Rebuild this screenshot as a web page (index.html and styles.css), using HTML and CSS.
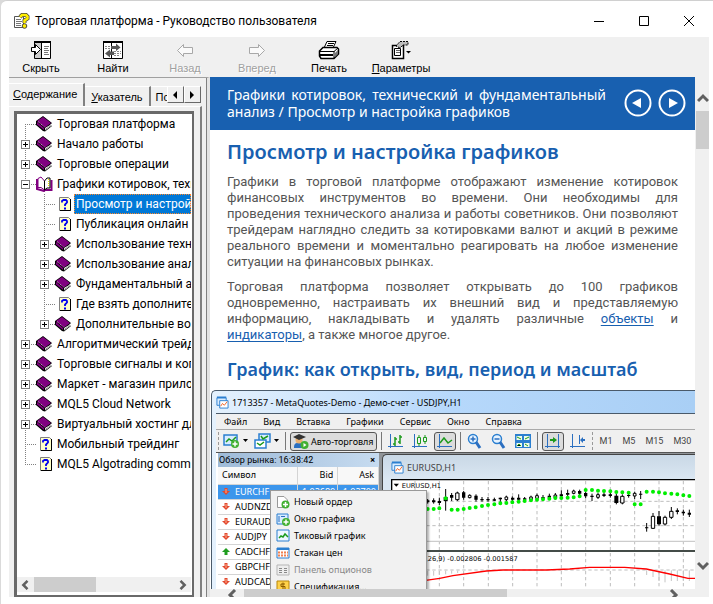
FILE: index.html
```
<!DOCTYPE html>
<html lang="ru">
<head>
    <meta charset="UTF-8">
    <meta name="viewport" content="width=device-width, initial-scale=1.0">
    <title>Торговая платформа - Руководство пользователя</title>
    <link rel="stylesheet" href="styles.css">
</head>
<body>
    <svg class="sprite" aria-hidden="true">
        <symbol id="book" viewBox="0 0 17 16">
            <path d="M0 5 L7 0 L16 7 L14 9 L16 10 L9 15.500 L7 15 L0 9 Z" fill="#000"/>
            <path d="M9 12 L15 8.500 V10 L9 14.500 Z" fill="#fff"/>
            <path d="M9 13.500 L15 9.500" stroke="#999" stroke-width="1"/>
            <path d="M1 5 L7 1 L15 7 L9 11.500 Z" fill="#800080"/>
            <path d="M1 6 L8 12 V14 L1 8.500 Z" fill="#800080"/>
            <path d="M2 5.500 L8.500 11" stroke="#d8a8d8" stroke-dasharray="1 1"/>
        </symbol>
        <symbol id="book-open" viewBox="0 0 17 16">
            <path d="M1 3 V13 L8 15 L9 14 H15.500 V4" fill="none" stroke="#800080" stroke-width="2"/>
            <path d="M2 2.500 L5 1 L8.500 5 V14 L5 11.500 H2 Z" fill="#fff" stroke="#800080"/>
            <path d="M8.500 5 L11 2 H14 V12 H11 L8.500 14 Z" fill="#fff" stroke="#000"/>
            <path d="M12.500 3 V11" stroke="#e8e800" stroke-dasharray="1 1"/>
        </symbol>
        <symbol id="topic" viewBox="0 0 17 16">
            <path d="M4.500 1.500 H13.500 L15.500 3.500 V14.500 H4.500 Z" fill="#ffffc8" stroke="#808080"/>
            <path d="M15.500 3 V14.500 H5" fill="none" stroke="#000"/>
            <path d="M7 6.500 V5 L8.500 4 H11 L12 5 V6.500 L10 8.500 V10" fill="none" stroke="#0000f0" stroke-width="1.800"/>
            <path d="M9 11.500 H11 V13.500 H9 Z" fill="#0000f0"/>
        </symbol>
        <symbol id="chart-window" viewBox="0 0 14 14">
            <path d="M1 2 H11 V10 H1 Z" fill="#d9ecff" stroke="#2b7fd0"/>
            <path d="M1 1.500 H11" stroke="#2b7fd0" stroke-width="2"/>
            <path d="M4 5 H13 V13 H4 Z" fill="#fff" stroke="#2b7fd0"/>
            <path d="M5 11 L7 8 L9 10 L12 6" fill="none" stroke="#f06020"/>
        </symbol>
        <symbol id="down" viewBox="0 0 8 9">
            <path d="M2.500 1 H5.500 V4 H8 L4 8 L0 4 H2.500 Z" fill="#e2492f"/>
            <path d="M4 2 V6" stroke="#ffb090"/>
        </symbol>
        <symbol id="up" viewBox="0 0 8 9">
            <path d="M2.500 8 H5.500 V5 H8 L4 1 L0 5 H2.500 Z" fill="#1f9d1f"/>
        </symbol>
        <symbol id="chevron" viewBox="0 0 12 12">
            <path d="M1 9 L6 4 L11 9" fill="none" stroke="#606060" stroke-width="3"/>
        </symbol>
    </svg>

    <div class="window">
        <header class="titlebar">
            <svg class="app-icon" viewBox="0 0 16 16">
                <path d="M0.500 3.500 H9.500 V14.500 H0.500 Z" fill="#fff" stroke="#555"/>
                <path d="M2 6.500 H7 M2 8.500 H8 M2 10.500 H7 M2 12.500 H7" stroke="#777"/>
                <path d="M6 4 L8 2 H12 L13.500 3.500 V5.500 L10.500 7.500 V10" fill="none" stroke="#444" stroke-width="4"/>
                <path d="M6 4 L8 2 H12 L13.500 3.500 V5.500 L10.500 7.500 V10" fill="none" stroke="#ffee00" stroke-width="2.500"/>
                <circle cx="10.500" cy="13" r="2.300" fill="#ffee00" stroke="#444"/>
            </svg>
            <span class="window-title">Торговая платформа - Руководство пользователя</span>
            <div class="window-controls">
                <button aria-label="Свернуть"><svg viewBox="0 0 12 12"><path d="M1 6.500 H11" stroke="#000"/></svg></button>
                <button aria-label="Развернуть"><svg viewBox="0 0 12 12"><path d="M1.500 1.500 H10.500 V10.500 H1.500 Z" fill="none" stroke="#000"/></svg></button>
                <button aria-label="Закрыть"><svg viewBox="0 0 12 12"><path d="M1 1 L11 11 M11 1 L1 11" stroke="#000"/></svg></button>
            </div>
        </header>

        <nav class="toolbar">
            <button class="tool">
                <svg viewBox="0 0 22 20">
                    <path d="M4.500 1.500 H20.500 V18.500 H4.500 Z" fill="#fff" stroke="#000"/>
                    <path d="M5 3 H11 V18 H5 Z" fill="#ccc"/>
                    <path d="M4 2 H21" stroke="#000" stroke-width="2"/>
                    <path d="M11.500 3 V18" stroke="#000"/>
                    <path d="M14 6.500 H19 M14 8.500 H18 M14 10.500 H19 M14 12.500 H18 M14 14.500 H19" stroke="#777"/>
                    <path d="M1.500 7.500 H5.500 V4.500 L10.500 9.500 L5.500 14.500 V11.500 H1.500 Z" fill="#fff" stroke="#000"/>
                </svg>
                <span>Скрыть</span>
            </button>
            <button class="tool">
                <svg viewBox="0 0 22 20">
                    <path d="M1.500 1.500 H20.500 V18.500 H1.500 Z" fill="#fff" stroke="#000"/>
                    <path d="M1 2 H21" stroke="#000" stroke-width="2"/>
                    <path d="M9.500 3 V18" stroke="#000"/>
                    <path d="M3 6.500 H9 M3 8.500 H8 M12 11.500 H19 M12 13.500 H19 M12 15.500 H18" stroke="#888" stroke-dasharray="2 1"/>
                    <path d="M9 6 H14 V3.500 L18.500 7.500 L14 11 V9 H9 Z" fill="#555"/>
                    <path d="M12 11.500 H8 V9.500 L3 13.500 L8 17.500 V15 H12 Z" fill="#555"/>
                </svg>
                <span>Найти</span>
            </button>
            <button class="tool" disabled>
                <svg viewBox="0 0 22 20"><path d="M3.500 10.500 L9.500 4.500 V7.500 H18.500 V13.500 H9.500 V16.500 Z" fill="#fafafa" stroke="#a8a8a8"/></svg>
                <span>Назад</span>
            </button>
            <button class="tool" disabled>
                <svg viewBox="0 0 22 20"><path d="M18.500 10.500 L12.500 4.500 V7.500 H3.500 V13.500 H12.500 V16.500 Z" fill="#fafafa" stroke="#a8a8a8"/></svg>
                <span>Вперед</span>
            </button>
            <button class="tool">
                <svg viewBox="0 0 22 20">
                    <path d="M6 8 L9 1.500 H18 L15 8 Z" fill="#fff" stroke="#000"/>
                    <path d="M10 3.500 H16 M9 5.500 H15" stroke="#000"/>
                    <path d="M1.500 11 L5 7.500 H19 L20.500 9 V14 L16 18.500 H3 L1.500 16 Z" fill="#fff" stroke="#000" stroke-width="1.500"/>
                    <path d="M1 11.500 H16 L20 8 M16 11 V18" fill="none" stroke="#000"/>
                    <path d="M2 15 H15" stroke="#000" stroke-width="2"/>
                    <path d="M17 13 L20 10 V14 L17 17 Z" fill="#777"/>
                </svg>
                <span>Печать</span>
            </button>
            <button class="tool">
                <svg viewBox="0 0 22 20">
                    <path d="M2.500 5.500 H13.500 V18.500 H2.500 Z" fill="#fff" stroke="#000" stroke-width="1.500"/>
                    <path d="M4.500 8.500 H10.500 V15.500 H4.500 Z" fill="#fff" stroke="#000"/>
                    <path d="M6 10.500 H10 M6 12.500 H10" stroke="#666"/>
                    <path d="M6 6 L10 1.500 H18 V5 H13 L10 8 Z" fill="#bbb" stroke="#000" stroke-dasharray="2 1"/>
                    <path d="M16 11 H21 L18.500 13.500 Z" fill="#000"/>
                </svg>
                <span><u>П</u>араметры</span>
            </button>
        </nav>

        <div class="panes">
            <aside class="sidebar">
                <div class="tabs">
                    <button class="tab active"><u>С</u>одержание</button>
                    <button class="tab"><u>У</u>казатель</button>
                    <button class="tab cut">По</button>
                    <div class="tab-scroll">
                        <button aria-label="Назад"><svg viewBox="0 0 8 8"><path d="M6 0 L2 4 L6 8 Z"/></svg></button>
                        <button aria-label="Вперед"><svg viewBox="0 0 8 8"><path d="M2 0 L6 4 L2 8 Z"/></svg></button>
                    </div>
                </div>
                <div class="tab-page">
                    <div class="tree-box">
                        <ul class="tree">
                            <li><div class="row"><span class="branch"></span><svg><use href="#book"/></svg><a href="#">Торговая платформа</a></div></li>
                            <li><div class="row"><span class="branch"><button class="plus" aria-label="Развернуть"></button></span><svg><use href="#book"/></svg><a href="#">Начало работы</a></div></li>
                            <li><div class="row"><span class="branch"><button class="plus" aria-label="Развернуть"></button></span><svg><use href="#book"/></svg><a href="#">Торговые операции</a></div></li>
                            <li>
                                <div class="row"><span class="branch"><button aria-label="Свернуть"></button></span><svg><use href="#book-open"/></svg><a href="#">Графики котировок, технический</a></div>
                                <ul>
                                    <li><div class="row"><span class="branch"></span><svg><use href="#topic"/></svg><a class="selected" href="#">Просмотр и настройка</a></div></li>
                                    <li><div class="row"><span class="branch"></span><svg><use href="#topic"/></svg><a href="#">Публикация онлайн</a></div></li>
                                    <li><div class="row"><span class="branch"><button class="plus" aria-label="Развернуть"></button></span><svg><use href="#book"/></svg><a href="#">Использование технических</a></div></li>
                                    <li><div class="row"><span class="branch"><button class="plus" aria-label="Развернуть"></button></span><svg><use href="#book"/></svg><a href="#">Использование аналитических</a></div></li>
                                    <li><div class="row"><span class="branch"><button class="plus" aria-label="Развернуть"></button></span><svg><use href="#book"/></svg><a href="#">Фундаментальный анализ</a></div></li>
                                    <li><div class="row"><span class="branch"></span><svg><use href="#topic"/></svg><a href="#">Где взять дополнительные</a></div></li>
                                    <li><div class="row"><span class="branch"><button class="plus" aria-label="Развернуть"></button></span><svg><use href="#book"/></svg><a href="#">Дополнительные возможности</a></div></li>
                                </ul>
                            </li>
                            <li><div class="row"><span class="branch"><button class="plus" aria-label="Развернуть"></button></span><svg><use href="#book"/></svg><a href="#">Алгоритмический трейдинг</a></div></li>
                            <li><div class="row"><span class="branch"><button class="plus" aria-label="Развернуть"></button></span><svg><use href="#book"/></svg><a href="#">Торговые сигналы и копирование</a></div></li>
                            <li><div class="row"><span class="branch"><button class="plus" aria-label="Развернуть"></button></span><svg><use href="#book"/></svg><a href="#">Маркет - магазин приложений</a></div></li>
                            <li><div class="row"><span class="branch"><button class="plus" aria-label="Развернуть"></button></span><svg><use href="#book"/></svg><a href="#">MQL5 Cloud Network</a></div></li>
                            <li><div class="row"><span class="branch"><button class="plus" aria-label="Развернуть"></button></span><svg><use href="#book"/></svg><a href="#">Виртуальный хостинг для</a></div></li>
                            <li><div class="row"><span class="branch"></span><svg><use href="#topic"/></svg><a href="#">Мобильный трейдинг</a></div></li>
                            <li><div class="row"><span class="branch"></span><svg><use href="#topic"/></svg><a href="#">MQL5 Algotrading community</a></div></li>
                        </ul>
                        <div class="tree-scroll">
                            <svg class="left" viewBox="0 0 12 12"><use href="#chevron"/></svg>
                            <span class="tree-thumb"></span>
                            <svg class="right" viewBox="0 0 12 12"><use href="#chevron"/></svg>
                        </div>
                    </div>
                </div>
            </aside>

            <div class="viewer">
                <div class="view-row">
                    <main class="doc">
                        <div class="doc-header">
                            <p>Графики котировок, технический и фундаментальный анализ / Просмотр и настройка графиков</p>
                            <button aria-label="Предыдущая"><svg viewBox="0 0 28 28"><circle cx="14" cy="14" r="12.500" fill="none" stroke="#fff" stroke-width="2"/><path d="M17 9 V19 L8 14 Z" fill="#fff"/></svg></button>
                            <button aria-label="Следующая"><svg viewBox="0 0 28 28"><circle cx="14" cy="14" r="12.500" fill="none" stroke="#fff" stroke-width="2"/><path d="M11 9 V19 L20 14 Z" fill="#fff"/></svg></button>
                        </div>
                        <div class="article">
                            <h1>Просмотр и настройка графиков</h1>
                            <p>
                                <span class="line">Графики в торговой платформе отображают изменение котировок</span>
                                <span class="line">финансовых инструментов во времени. Они необходимы для</span>
                                <span class="line">проведения технического анализа и работы советников. Они позволяют</span>
                                <span class="line">трейдерам наглядно следить за котировками валют и акций в режиме</span>
                                <span class="line">реального времени и моментально реагировать на любое изменение</span>
                                ситуации на финансовых рынках.
                            </p>
                            <p>
                                <span class="line">Торговая платформа позволяет открывать до 100 графиков</span>
                                <span class="line">одновременно, настраивать их внешний вид и представляемую</span>
                                <span class="line">информацию, накладывать и удалять различные <a href="#">объекты</a> и</span>
                                <a href="#">индикаторы</a>, а также многое другое.
                            </p>
                            <h2>График: как открыть, вид, период и масштаб</h2>
                        </div>

                        <div class="terminal">
                            <div class="term-title"><svg><use href="#chart-window"/></svg>1713357 - MetaQuotes-Demo - Демо-счет - USDJPY,H1</div>
                            <div class="term-menu">
                                <span>Файл</span><span>Вид</span><span>Вставка</span><span>Графики</span><span>Сервис</span><span>Окно</span><span>Справка</span>
                            </div>
                            <div class="term-tools">
                                <i class="grip"></i>
                                <svg class="wide" viewBox="0 0 27 18">
                                    <path d="M1 3 H14 V13 H1 Z" fill="#d9ecff" stroke="#2b7fd0" stroke-width="1.500"/><path d="M3 10 L6 7 L9 9 L13 5" fill="none" stroke="#1c9a1c" stroke-width="1.500"/>
                                    <circle cx="12" cy="12" r="4" fill="#42b032"/><path d="M12 9.500 V14.500 M9.500 12 H14.500" stroke="#fff" stroke-width="1.500"/><path d="M20 7 H25 L22.500 10 Z"/>
                                </svg>
                                <svg class="wide" viewBox="0 0 27 18">
                                    <path d="M5 2 H16 V10 H5 Z" fill="#d9ecff" stroke="#2b7fd0" stroke-width="1.500"/><path d="M1 8 H12 V16 H1 Z" fill="#fff" stroke="#2b7fd0" stroke-width="1.500"/>
                                    <path d="M7 4 L9 7 L14 4 M3 11 L6 13 L10 10" fill="none" stroke="#1c9a1c" stroke-width="1.500"/><path d="M20 7 H25 L22.500 10 Z"/>
                                </svg>
                                <i class="sep"></i>
                                <button class="auto">
                                    <svg viewBox="0 0 16 16"><path d="M1 15 C1 9 4 10 6 10 C9 10 11 11 11 15 Z" fill="#2b6fc0"/><circle cx="6" cy="7" r="3.500" fill="#eab070"/><path d="M0 4 L6 1 L13 4 L6 7 Z" fill="#333"/><circle cx="11.500" cy="12" r="4" fill="#42b032"/><path d="M10.500 10 V14 L13.500 12 Z" fill="#fff"/></svg>
                                    Авто-торговля
                                </button>
                                <i class="sep"></i>
                                <svg viewBox="0 0 16 16"><path d="M2.500 1 V15 M0 13.500 H15" stroke="#2b6fc0"/><path d="M7 4 V13 M5 11 H7 M7 6 H9 M12 2 V11 M10 9 H12 M12 4 H14" stroke="#1c9a1c" stroke-width="1.500"/></svg>
                                <svg viewBox="0 0 16 16"><path d="M2.500 1 V15 M0 13.500 H15" stroke="#2b6fc0"/><path d="M5.500 4.500 H8.500 V10.500 H5.500 Z M11.500 4.500 H14.500 V8.500 H11.500 Z M7 2 V4 M7 11 V13 M13 2 V4 M13 9 V11" fill="none" stroke="#1c9a1c"/></svg>
                                <button class="pressed" aria-label="Линия"><svg viewBox="0 0 16 16"><path d="M2.500 1 V15 M0 13.500 H15" stroke="#2b6fc0"/><path d="M3 10 L7 5 L11 10 L15 7" fill="none" stroke="#1c9a1c" stroke-width="1.500"/></svg></button>
                                <i class="sep"></i>
                                <svg viewBox="0 0 16 16"><circle cx="6" cy="6" r="4.500" fill="#e6f3ff" stroke="#2b7fd0" stroke-width="1.500"/><path d="M9 9 L13 15" stroke="#2b6fc0" stroke-width="3"/><path d="M3.500 6 H8.500 M6 3.500 V8.500" stroke="#2b6fc0" stroke-width="1.500"/></svg>
                                <svg viewBox="0 0 16 16"><circle cx="6" cy="6" r="4.500" fill="#e6f3ff" stroke="#2b7fd0" stroke-width="1.500"/><path d="M9 9 L13 15" stroke="#2b6fc0" stroke-width="3"/><path d="M3.500 6 H8.500" stroke="#2b6fc0" stroke-width="1.500"/></svg>
                                <svg viewBox="0 0 16 16"><path d="M0 1 H16 V15 H0 Z" fill="#2b7fd0"/><path d="M1.500 3 H7 V7 H1.500 Z M9 3 H14.500 V7 H9 Z M1.500 10 H7 V14 H1.500 Z M9 10 H14.500 V14 H9 Z" fill="#eefbe8"/><path d="M2 4 L6 6 M10 6 L14 4 M2 13 L4 11 L6 13 M10 11 L13 13" stroke="#1c9a1c"/></svg>
                                <i class="sep"></i>
                                <button class="pressed" aria-label="Сдвиг"><svg viewBox="0 0 16 16"><path d="M2.500 1 V15 M0 13.500 H15 M13.500 1 V15" stroke="#2b6fc0"/><path d="M5 6 H8 V4 L12 7 L8 10 V8 H5 Z" fill="#1c9a1c"/></svg></button>
                                <svg viewBox="0 0 16 16"><path d="M2.500 1 V15 M0 13.500 H15 M9.500 2 V11" stroke="#2b6fc0"/><path d="M15 6 H13 V4 L10 7 L13 10 V8 H15 Z" fill="#2b6fc0"/></svg>
                                <i class="grip"></i>
                                <span class="period">M1</span><span class="period">M5</span><span class="period">M15</span><span class="period">M30</span>
                                <i class="h1-edge"></i>
                            </div>
                            <div class="term-body">
                                <div class="market">
                                    <div class="market-title"><span>Обзор рынка: 16:38:42</span><b>×</b></div>
                                    <table>
                                        <thead><tr><th>Символ</th><th>Bid</th><th>Ask</th></tr></thead>
                                        <tbody>
                                            <tr class="current"><td><svg><use href="#down"/></svg>EURCHF</td><td>1.02680</td><td>1.02700</td></tr>
                                            <tr><td><svg><use href="#down"/></svg>AUDNZD</td><td></td><td></td></tr>
                                            <tr><td><svg><use href="#down"/></svg>EURAUD</td><td></td><td></td></tr>
                                            <tr><td><svg><use href="#down"/></svg>AUDJPY</td><td></td><td></td></tr>
                                            <tr><td><svg><use href="#up"/></svg>CADCHF</td><td></td><td></td></tr>
                                            <tr><td><svg><use href="#down"/></svg>GBPCHF</td><td></td><td></td></tr>
                                            <tr><td><svg><use href="#down"/></svg>AUDCAD</td><td></td><td></td></tr>
                                        </tbody>
                                    </table>
                                    <ul class="context-menu">
                                        <li><svg viewBox="0 0 14 14"><path d="M1.500 1.500 H8 L11.500 5 V12.500 H1.500 Z" fill="#fff" stroke="#999"/><circle cx="9.500" cy="9.500" r="4" fill="#42b032"/><path d="M9.500 7 V12 M7 9.500 H12" stroke="#fff" stroke-width="1.500"/></svg>Новый ордер</li>
                                        <li><svg viewBox="0 0 14 14"><path d="M1 2 H12 V12 H1 Z" fill="#d9ecff" stroke="#2b7fd0"/><path d="M3 4 V10 M5 4.500 H9" stroke="#2b6fc0"/><circle cx="10" cy="10" r="4" fill="#42b032"/><path d="M10 7.500 V12.500 M7.500 10 H12.500" stroke="#fff" stroke-width="1.500"/></svg>Окно графика</li>
                                        <li><svg viewBox="0 0 14 14"><path d="M1 1 H13 V12 H1 Z" fill="#eef6ff" stroke="#2b7fd0"/><path d="M3 9 L5 7 L7 8 L9 5 L12 8" fill="none" stroke="#1c9a1c" stroke-width="1.500"/></svg>Тиковый график</li>
                                        <li><svg viewBox="0 0 14 14"><path d="M1 2 H13 V12 H1 Z" fill="#fff" stroke="#2b7fd0"/><path d="M1 3 H13" stroke="#2b7fd0" stroke-width="2"/><path d="M2 6.500 H12 M2 9.500 H12" stroke="#f08050" stroke-width="2" stroke-dasharray="2 1"/></svg>Стакан цен</li>
                                        <li class="off"><svg viewBox="0 0 14 14"><path d="M1 2 H13 V12 H1 Z" fill="#eee" stroke="#b5b5b5"/><path d="M3 5.500 H6 M8 5.500 H11 M3 7.500 H6 M8 7.500 H11 M3 9.500 H6 M8 9.500 H11" stroke="#888"/></svg>Панель опционов</li>
                                        <li><svg viewBox="0 0 14 14"><path d="M1 1 H13 V12 H1 Z" fill="#ffd24a" stroke="#b8860b"/><path d="M9 4 H5 V6.500 H9 V9.500 H5 M7 2.500 V11" fill="none" stroke="#8a5a00"/></svg>Спецификация...</li>
                                    </ul>
                                </div>
                                <div class="chart-window">
                                    <div class="chart-title"><svg><use href="#chart-window"/></svg>EURUSD,H1</div>
                                    <svg class="chart" viewBox="-186 0 912 330">
                                        <path class="grid" d="M-188 67 H726 M-188 140 H726 M-188 273 H726 M-114 6 V330 M-41 6 V330 M32 6 V330 M106 6 V330 M179 6 V330 M252 6 V330 M325 6 V330 M398 6 V330 M472 6 V330 M545 6 V330 M618 6 V330 M691 6 V330"/>
                                        <path d="M-188 187 H726" stroke="#ccc" stroke-width="4"/>
                                        <path d="M-188 216 H726" stroke="#444c48" stroke-width="6"/>
                                        <path d="M-188 2 H726 M-184 0 V330" stroke="#000" stroke-width="4"/>
                                        <path d="M-178 14 H-162 L-170 23 Z"/>
                                        <text x="-154" y="26">EURUSD,H1</text>
                                        <text x="-82" y="246">,26,9) -0.002806 -0.001587</text>
                                        <path class="wick" d="M-76 60 V74 M-58 58 V74 M-41 56 V78 M-22 30 V95 M-4 42 V66 M13 38 V66 M32 36 V62 M50 46 V58 M69 46 V68 M87 54 V68 M105 54 V68 M124 56 V66 M142 56 V72 M160 50 V66 M178 52 V66 M197 46 V66 M215 54 V70 M234 50 V68 M252 44 V62 M270 48 V66 M289 44 V62 M307 42 V62 M325 34 V56 M344 32 V54 M362 32 V46 M380 32 V50 M398 38 V58 M417 44 V66 M435 42 V60 M453 40 V54 M472 40 V56 M490 44 V76 M508 46 V76 M527 42 V56 M545 38 V60 M563 36 V60 M581 132 V158 M600 102 V150 M618 96 V140 M636 110 V140 M655 84 V120 M673 88 V106 M691 92 V110 M709 92 V114"/>
                                        <path d="M-81 64 h10 v6 h-10z M-63 64 h10 v6 h-10z M-46 66 h10 v6 h-10z M-28 54 h12 v12 h-12z M-9 48 h10 v8 h-10z M27 40 h10 v16 h-10z M64 50 h10 v12 h-10z M82 60 h10 v4 h-10z M100 60 h10 v4 h-10z M119 61 h10 v4 h-10z M137 56 h10 v5 h-10z M174 56 h10 v6 h-10z M192 56 h10 v6 h-10z M210 58 h10 v4 h-10z M265 54 h10 v5 h-10z M284 50 h10 v6 h-10z M320 46 h10 v6 h-10z M339 42 h10 v5 h-10z M375 36 h10 v8 h-10z M393 42 h10 v10 h-10z M412 50 h10 v4 h-10z M448 46 h10 v5 h-10z M467 46 h10 v5 h-10z M484 50 h12 v22 h-12z M522 48 h10 v3 h-10z M558 44 h10 v3 h-10z M576 145 h10 v3 h-10z M612 112 h12 v24 h-12z M668 94 h10 v5 h-10z M686 98 h10 v5 h-10z M704 101 h10 v6 h-10z"/>
                                        <path d="M8 42 h10 v20 h-10z M46 49 h8 v7 h-8z M156 54 h8 v8 h-8z M230 54 h8 v8 h-8z M248 50 h8 v8 h-8z M303 48 h8 v8 h-8z M358 36 h8 v7 h-8z M431 47 h8 v8 h-8z M503 52 h10 v20 h-10z M541 43 h8 v8 h-8z M595 112 h10 v36 h-10z M631 115 h10 v20 h-10z M650 97 h10 v18 h-10z" fill="#fff" stroke="#000" stroke-width="3"/>
                                        <path class="dots" d="M-76 90h0M-58 90h0M-41 88h0M-22 58h0M-4 92h0M14 92h0M32 90h0M50 87h0M68 85h0M87 81h0M105 78h0M124 76h0M142 73h0M160 72h0M178 70h0M197 68h0M215 66h0M234 64h0M252 62h0M270 61h0M289 59h0M307 57h0M325 57h0M344 56h0M362 55h0M380 52h0M398 33h0M417 33h0M435 35h0M453 36h0M472 37h0M490 39h0M508 40h0M527 41h0M545 76h0M563 76h0M581 38h0M600 38h0M618 40h0M636 43h0M655 44h0M673 46h0M691 49h0M709 51h0"/>
                                        <path d="M-76 276 V290 M-58 276 V290 M-41 275 V288 M-22 275 V286 M-4 275 V284 M14 275 V282 M581 274 V288 M600 274 V294 M618 274 V306 M636 274 V310 M655 274 V306 M673 274 V306 M691 274 V306 M709 274 V306" stroke="#c4c4c4" stroke-width="3"/>
                                        <path d="M-82 304 L-40 298 L0 290 L100 276 L150 273 H280 L350 270 L410 265 H515 L580 270 L650 285 L705 298 H726" fill="none" stroke="#f00" stroke-width="4"/>
                                    </svg>
                                </div>
                            </div>
                        </div>
                    </main>
                    <div class="vscroll">
                        <svg class="arrow-up"><use href="#chevron"/></svg>
                        <span class="vthumb"></span>
                        <svg class="arrow-down"><use href="#chevron"/></svg>
                    </div>
                </div>
                <div class="hscroll">
                    <svg class="left"><use href="#chevron"/></svg>
                    <span class="hthumb"></span>
                    <svg class="right"><use href="#chevron"/></svg>
                </div>
            </div>
        </div>
    </div>
</body>
</html>
```

FILE: styles.css
```
* {
    box-sizing: border-box;
}
body {
    margin: 0;
    background: #dadada;
    font-family: Roboto, "Open Sans", sans-serif;
    font-size: 12px;
    color: #000;
}
button {
    padding: 0;
    border: none;
    background: none;
    font: inherit;
    color: inherit;
}
ul {
    list-style: none;
    margin: 0;
    padding: 0;
}
svg {
    flex: none;
    display: block;
}
.sprite {
    position: absolute;
    width: 0;
    height: 0;
}
.window {
    height: 100vh;
    margin-left: 1px;
    padding: 0 4px 7px 8px;
    border-top: 1px solid #d0d0d0;
    border-radius: 6px 0 0 0;
    background: #fff;
    display: flex;
    flex-direction: column;
    overflow: hidden;
}

/* title bar */
.titlebar {
    flex: none;
    height: 36px;
    padding: 4px 0 0 5px;
    display: flex;
    align-items: center;
}
.app-icon {
    width: 16px;
    height: 16px;
    margin-right: 5px;
}
.window-title {
    flex: 1;
    white-space: nowrap;
}
.window-controls {
    display: flex;
    gap: 33px;
    padding-right: 14px;
}
.window-controls svg {
    width: 12px;
    height: 12px;
}

/* toolbar */
.toolbar {
    flex: none;
    height: 40px;
    background: #f0f0f0;
    display: flex;
}
.tool {
    width: 72px;
    padding-top: 3px;
    font-family: "Liberation Sans", sans-serif;
    font-size: 11px;
    display: flex;
    flex-direction: column;
    align-items: center;
}
.tool:first-child {
    width: 68px;
    padding-right: 4px;
}
.tool svg {
    width: 22px;
    height: 20px;
}
.tool span {
    line-height: 16px;
}
.tool:disabled {
    color: #a0a0a0;
    text-shadow: 1px 1px #fff;
}

.panes {
    flex: 1;
    min-height: 0;
    display: flex;
}

/* contents pane */
.sidebar {
    flex: none;
    width: 201px;
    padding-top: 5px;
    background: #f0f0f0;
    border-top: 1px solid #a0a0a0;
    border-right: 3px solid #e3e3e3;
    box-shadow: inset -1px 0 #808080;
    display: flex;
    flex-direction: column;
}
.tabs {
    height: 23px;
    display: flex;
    align-items: flex-end;
    font-family: "Liberation Sans", sans-serif;
    font-size: 11px;
}
.tab {
    height: 20px;
    padding: 0 6px;
    border-top: 1px solid #fff;
    border-right: 2px solid #808080;
    white-space: nowrap;
}
.tab.active {
    height: 23px;
    padding: 0 6px 2px 4px;
}
.tab.cut {
    width: 16px;
    padding: 0 0 0 5px;
    border-right: none;
    overflow: hidden;
}
.tab-scroll {
    display: flex;
    align-self: flex-start;
    padding-top: 3px;
}
.tab-scroll button {
    width: 17px;
    height: 17px;
    border: 1px solid;
    border-color: #fff #696969 #696969 #fff;
    display: flex;
    align-items: center;
    justify-content: center;
}
.tab-scroll svg {
    width: 8px;
    height: 8px;
}
.tab-page {
    flex: 1;
    min-height: 0;
    margin-right: 5px;
    padding: 4px 6px 0 5px;
    border-top: 1px solid #fff;
    border-right: 2px solid #808080;
    display: flex;
}
.tree-box {
    flex: 1;
    min-width: 0;
    padding: 0 1px 1px 0;
    border: 2px solid #696969;
    border-width: 3px 2px 2px 3px;
    background: #fff;
    display: flex;
    flex-direction: column;
}
.tree {
    flex: 1;
    min-height: 0;
    overflow: hidden;
}
.tree ul {
    margin-left: 19px;
    background: repeating-linear-gradient(#808080 0 1px, transparent 1px 2px) 8px 0 / 1px calc(100% - 10px) no-repeat;
}
.tree > li {
    background: repeating-linear-gradient(#808080 0 1px, transparent 1px 2px) 8px 0 / 1px 100% no-repeat;
}
.tree > li:first-child {
    background-position: 8px 10px;
}
.tree > li:last-child {
    background-size: 1px 10px;
}
.row {
    height: 20px;
    display: flex;
    align-items: center;
}
.row svg {
    width: 17px;
    height: 16px;
}
.branch {
    flex: none;
    width: 19px;
    height: 20px;
    padding: 6px 0 0 4px;
    background: repeating-linear-gradient(90deg, #808080 0 1px, transparent 1px 2px) 8px 10px / 11px 1px no-repeat;
}
.branch button {
    display: block;
    width: 9px;
    height: 9px;
    border: 1px solid #808080;
    background: linear-gradient(#000, #000) center / 5px 1px no-repeat #fff;
}
.branch .plus {
    background: linear-gradient(#000, #000) center / 5px 1px no-repeat, linear-gradient(#000, #000) center / 1px 5px no-repeat #fff;
}
.row a {
    flex: 1;
    min-width: 0;
    margin-left: 2px;
    padding-left: 2px;
    line-height: 20px;
    color: #000;
    text-decoration: none;
    white-space: nowrap;
    overflow: hidden;
}
.row .selected {
    background: #0078d7;
    color: #fff;
    outline: 1px dotted #ff8728;
    outline-offset: -1px;
}
.tree-scroll {
    flex: none;
    height: 15px;
    margin-bottom: 2px;
    padding: 0 3px;
    background: #f0f0f0;
    display: flex;
    align-items: center;
}
.tree-scroll svg {
    width: 10px;
    height: 10px;
}
.tree-thumb {
    width: 62px;
    height: 15px;
    margin: 0 auto 0 4px;
    background: #cdcdcd;
}
.left {
    transform: rotate(-90deg);
}
.right {
    transform: rotate(90deg);
}

/* topic pane */
.viewer {
    flex: 1;
    min-width: 0;
    font-family: "Noto Sans", "Open Sans", sans-serif;
    display: flex;
    flex-direction: column;
}
.view-row {
    flex: 1;
    min-height: 0;
    display: flex;
}
.doc {
    flex: 1;
    min-width: 0;
    overflow: hidden;
}
.doc-header {
    height: 53px;
    padding: 0 9px 2px 17px;
    background: #1860b0;
    color: #fff;
    display: flex;
    align-items: center;
    gap: 6px;
}
.doc-header p {
    flex: 1;
    margin: 0 12px 0 0;
    font-size: 14px;
    line-height: 17px;
    text-align: justify;
}
.doc-header svg {
    width: 28px;
    height: 28px;
}
.article {
    padding: 8px 17px 0;
    color: #555;
}
.article h1,
.article h2 {
    margin: 0;
    color: #1860b0;
    font-size: 20px;
    font-weight: 600;
    line-height: 28px;
}
.article h2 {
    margin-top: 14px;
    font-size: 18px;
    line-height: 24px;
}
.article p {
    margin: 8px 0 9px;
    font-family: Roboto, sans-serif;
    font-size: 13px;
    line-height: 16px;
}
.line {
    display: block;
    text-align: justify;
    text-align-last: justify;
}
.article a {
    color: #1860b0;
    text-underline-offset: 2px;
}

/* trading terminal */
.terminal {
    height: 240px;
    margin: 9px 0 0 1px;
    padding-left: 4px;
    border: 1px solid #4a5a6a;
    border-right: none;
    border-radius: 5px 0 0 0;
    background: linear-gradient(90deg, #e4f1fd, #b6d8fb 50%, #a9cff5);
    font-size: 9px;
    overflow: hidden;
}
.term-title {
    height: 22px;
    display: flex;
    align-items: center;
}
.term-title svg,
.chart-title svg {
    width: 13px;
    height: 13px;
    margin-right: 3px;
}
.term-menu {
    height: 16px;
    padding-left: 8px;
    border-top: 1px solid #4a5a6a;
    background: #f0f0f0;
    display: flex;
    align-items: center;
    gap: 16px;
}
.term-tools {
    height: 24px;
    padding-left: 2px;
    border-top: 1px solid #aaa;
    border-bottom: 1px solid #555;
    background: #f0f0f0;
    display: flex;
    align-items: center;
    gap: 4px;
}
.term-tools > * {
    flex: none;
}
.term-tools svg {
    width: 16px;
    height: 16px;
}
.term-tools > svg {
    margin: 0 2px;
}
.term-tools .wide {
    width: 27px;
    height: 18px;
    margin: 0;
}
.term-tools button {
    height: 19px;
    padding: 0 2px;
    border: 1px solid #555;
    border-radius: 3px;
    background: #dcdcdc;
    white-space: nowrap;
}
.term-tools .auto {
    display: flex;
    align-items: center;
    gap: 2px;
}
.grip {
    height: 18px;
    border-left: 1px dashed #999;
}
.sep {
    height: 18px;
    border-left: 1px solid #777;
}
.period {
    margin: 0 3px;
    font-family: Roboto, sans-serif;
    color: #444;
}
.h1-edge {
    width: 4px;
    height: 19px;
    border: 1px solid #555;
    border-right: none;
    border-radius: 3px 0 0 3px;
}
.term-body {
    height: 180px;
    background: #909498;
    display: flex;
}
.market {
    flex: none;
    position: relative;
    width: 163px;
    padding-left: 2px;
    background: #fff;
}
.market-title {
    height: 14px;
    padding: 0 4px 0 1px;
    background: linear-gradient(90deg, #9fbbd8, #c6dbf0);
    font-family: Roboto, sans-serif;
    display: flex;
    align-items: center;
    justify-content: space-between;
}
.market table {
    width: 161px;
    border-collapse: collapse;
    table-layout: fixed;
}
.market th,
.market td {
    height: 15px;
    padding: 0 4px;
    border: solid #d4d4d4;
    border-width: 0 1px 1px 0;
    font-weight: normal;
    line-height: 14px;
    text-align: right;
}
.market th {
    height: 17px;
    background: #f8f8f8;
}
.market th:first-child,
.market td:first-child {
    width: 79px;
    text-align: left;
}
.market td svg {
    display: inline-block;
    width: 8px;
    height: 9px;
    margin-right: 5px;
    vertical-align: -1px;
}
.market .current td {
    background: #3c96ec;
    color: #fff;
}
.market td + td {
    padding: 0 2px;
}
.context-menu {
    position: absolute;
    top: 37px;
    left: 54px;
    width: 157px;
    padding: 2px 5px;
    border: 1px solid #999;
    background: #f1f1f1;
    box-shadow: 2px 2px 2px rgba(0, 0, 0, 0.3);
}
.context-menu li {
    height: 17px;
    display: flex;
    align-items: center;
}
.context-menu svg {
    width: 14px;
    height: 14px;
    margin-right: 4px;
}
.context-menu .off {
    color: #888;
}
.chart-window {
    flex: 1;
    min-width: 0;
    margin: 1px 0 0 3px;
    padding-left: 8px;
    border: 1px solid #444;
    border-right: none;
    border-radius: 5px 0 0 0;
    background: linear-gradient(#c9d8e6, #dbe7f2 25px);
    overflow: hidden;
}
.chart-title {
    height: 24px;
    display: flex;
    align-items: center;
    color: #444;
}
.chart {
    width: 304px;
    height: 110px;
    background: #fff;
}
.chart text {
    font-family: "DejaVu Sans", sans-serif;
    font-size: 20px;
}
.grid {
    fill: none;
    stroke: #bdbdbd;
    stroke-width: 3;
    stroke-dasharray: 10 8;
}
.wick {
    stroke: #000;
    stroke-width: 3;
}
.dots {
    stroke: #0e0;
    stroke-width: 12;
    stroke-linecap: round;
}

/* scroll bars of the topic pane */
.vscroll {
    flex: none;
    width: 14px;
    padding-top: 15px;
    background: #f0f0f0;
    display: flex;
    flex-direction: column;
    align-items: flex-end;
    overflow: hidden;
}
.vscroll svg {
    width: 12px;
    height: 12px;
}
.vthumb {
    width: 13px;
    height: 38px;
    margin: 7px 0 auto;
    background: #cdcdcd;
}
.arrow-down {
    margin-bottom: 17px;
    transform: rotate(180deg);
}
.hscroll {
    flex: none;
    height: 8px;
    padding: 0 29px 0 16px;
    background: #f0f0f0;
    display: flex;
    overflow: hidden;
}
.hscroll svg {
    width: 12px;
    height: 12px;
}
.hthumb {
    width: 263px;
    margin: 0 auto 0 6px;
    background: #cdcdcd;
}
```
